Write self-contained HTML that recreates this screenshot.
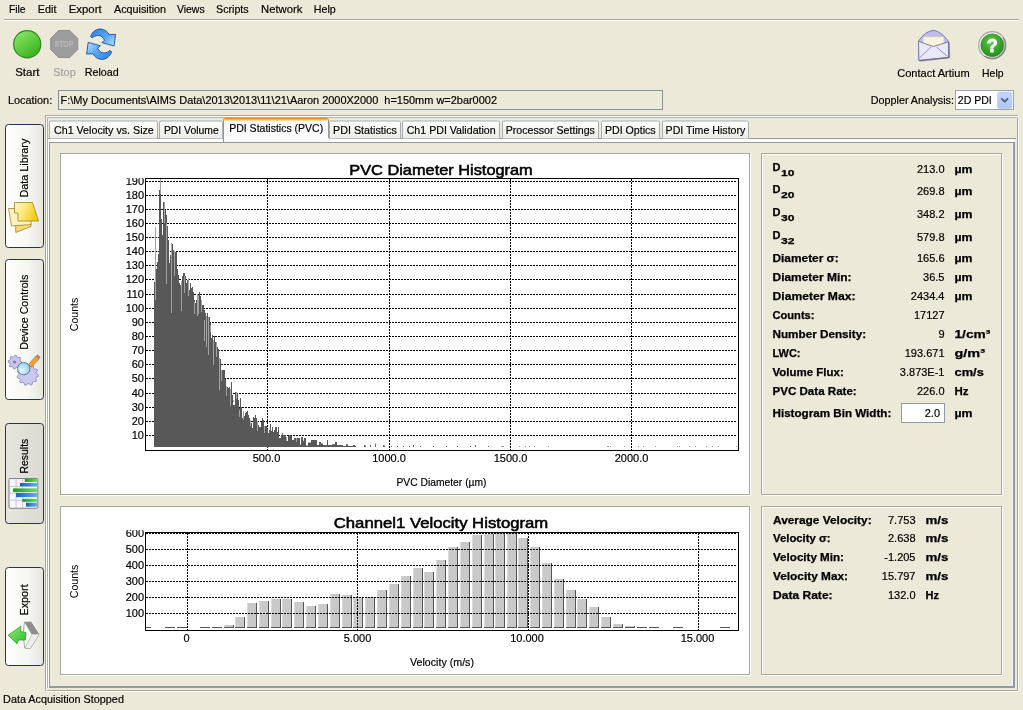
<!DOCTYPE html>
<html><head><meta charset="utf-8"><title>AIMS</title>
<style>
html,body{margin:0;padding:0;background:#ECE9D8;}
body{width:1023px;height:710px;overflow:hidden;position:relative;}
svg{position:absolute;left:0;top:0;font-family:"Liberation Sans", sans-serif;will-change:transform;}
</style></head>
<body>
<svg width="1023" height="710" viewBox="0 0 1023 710">
<rect x="0" y="0" width="1023" height="710" fill="#ECE9D8"/>
<text x="8.9" y="13" font-size="11" font-weight="normal" fill="#000" text-anchor="start" stroke="#000" stroke-width="0.18" textLength="16.7" lengthAdjust="spacingAndGlyphs" >File</text>
<text x="37.8" y="13" font-size="11" font-weight="normal" fill="#000" text-anchor="start" stroke="#000" stroke-width="0.18" textLength="18.6" lengthAdjust="spacingAndGlyphs" >Edit</text>
<text x="68.8" y="13" font-size="11" font-weight="normal" fill="#000" text-anchor="start" stroke="#000" stroke-width="0.18" textLength="32.8" lengthAdjust="spacingAndGlyphs" >Export</text>
<text x="114.0" y="13" font-size="11" font-weight="normal" fill="#000" text-anchor="start" stroke="#000" stroke-width="0.18" textLength="52.0" lengthAdjust="spacingAndGlyphs" >Acquisition</text>
<text x="176.9" y="13" font-size="11" font-weight="normal" fill="#000" text-anchor="start" stroke="#000" stroke-width="0.18" textLength="27.8" lengthAdjust="spacingAndGlyphs" >Views</text>
<text x="216.0" y="13" font-size="11" font-weight="normal" fill="#000" text-anchor="start" stroke="#000" stroke-width="0.18" textLength="32.7" lengthAdjust="spacingAndGlyphs" >Scripts</text>
<text x="261.0" y="13" font-size="11" font-weight="normal" fill="#000" text-anchor="start" stroke="#000" stroke-width="0.18" textLength="41.3" lengthAdjust="spacingAndGlyphs" >Network</text>
<text x="313.8" y="13" font-size="11" font-weight="normal" fill="#000" text-anchor="start" stroke="#000" stroke-width="0.18" textLength="22.0" lengthAdjust="spacingAndGlyphs" >Help</text>
<rect x="4" y="19" width="1015" height="1" fill="#ACA899"/><rect x="4" y="20" width="1015" height="1" fill="#FFFFFF"/>
<defs>
<linearGradient id="gStart" x1="0.2" y1="0.1" x2="0.8" y2="0.95">
 <stop offset="0" stop-color="#86E262"/><stop offset="0.5" stop-color="#5CCB3C"/><stop offset="1" stop-color="#38AE22"/>
</linearGradient>
<radialGradient id="gHelp" cx="0.45" cy="0.35" r="0.7">
 <stop offset="0" stop-color="#5CC846"/><stop offset="1" stop-color="#1F8A18"/>
</radialGradient>
<linearGradient id="gBtn" x1="0" y1="0" x2="1" y2="0">
 <stop offset="0" stop-color="#FFFFFF"/><stop offset="0.6" stop-color="#F6F6F2"/><stop offset="1" stop-color="#E6E5DC"/>
</linearGradient>
<linearGradient id="gBtnSel" x1="0" y1="0" x2="1" y2="0">
 <stop offset="0" stop-color="#E6E5DE"/><stop offset="1" stop-color="#DCDBD3"/>
</linearGradient>
<linearGradient id="gTab" x1="0" y1="0" x2="0" y2="1">
 <stop offset="0" stop-color="#FFFFFF"/><stop offset="1" stop-color="#ECEBE6"/>
</linearGradient>
<linearGradient id="gArrow" x1="0" y1="0.2" x2="1" y2="0.9">
 <stop offset="0" stop-color="#2E84E4"/><stop offset="0.55" stop-color="#5AA8F0"/><stop offset="1" stop-color="#B4DEFF"/>
</linearGradient>
<linearGradient id="gCombo" x1="0" y1="0" x2="0" y2="1">
 <stop offset="0" stop-color="#C6D6FC"/><stop offset="1" stop-color="#B0C6F5"/>
</linearGradient>
<clipPath id="clipTop"><rect x="100" y="178.3" width="650" height="300"/></clipPath>
<clipPath id="clipBot"><rect x="100" y="530.2" width="650" height="130"/></clipPath><clipPath id="clipBars"><rect x="146" y="533" width="592" height="97"/></clipPath>
</defs>
<circle cx="27.2" cy="44.2" r="13.6" fill="url(#gStart)" stroke="#2F8A20" stroke-width="1.2"/>
<polygon points="77.7,49.6 69.8,57.5 58.6,57.5 50.7,49.6 50.7,38.4 58.6,30.5 69.8,30.5 77.7,38.4" fill="#9D9D9D" stroke="#8E8E8E" stroke-width="1"/>
<text x="64" y="46.8" font-size="9.5" font-weight="bold" fill="#B4B4B4" stroke="#B4B4B4" stroke-width="0.4" text-anchor="middle" textLength="19" lengthAdjust="spacingAndGlyphs">STOP</text>
<g stroke="#1A4E9C" stroke-width="0.9" fill="url(#gArrow)" stroke-linejoin="round">
<path id="arTop" d="M90.6,36.4 C92.6,31.2 96.8,28.8 100.8,29 C104.6,29.3 107.4,31.4 109.2,34.6 L115.6,34.4 L114,46 L101.8,42.6 L104.6,40.4 C103.2,37.4 101.2,35.6 98.4,35.5 C95.8,35.4 93.8,36.6 92.2,38 Z"/>
<use href="#arTop" transform="rotate(180 101.1 44.2)"/>
</g>
<text x="15.2" y="76" font-size="11" font-weight="normal" fill="#000" text-anchor="start" stroke="#000" stroke-width="0.18" textLength="24.3" lengthAdjust="spacingAndGlyphs" >Start</text>
<text x="53.3" y="76" font-size="11" font-weight="normal" fill="#A3A3A3" text-anchor="start" stroke="#A3A3A3" stroke-width="0.18" textLength="22.4" lengthAdjust="spacingAndGlyphs" >Stop</text>
<text x="84.7" y="76" font-size="11" font-weight="normal" fill="#000" text-anchor="start" stroke="#000" stroke-width="0.18" textLength="34.0" lengthAdjust="spacingAndGlyphs" >Reload</text>
<g stroke="#7A7AAA" stroke-width="1" stroke-linejoin="round">
<path d="M918.5,41 Q925,31.5 933.3,30.3 Q941.5,31.5 948.5,41.5 L948.5,57.5 L918.8,60.3 Z" fill="#BDBDEE"/>
<path d="M923,36.8 L943.8,36.8 L944,48 L923,48 Z" fill="#FDF3D8" stroke="#C9C2AC" stroke-width="0.6"/>
<path d="M918.5,41.2 Q927,44.5 933.3,46.5 Q940,44.5 948.5,41.8 L948.5,57.5 L918.8,60.3 Z" fill="#E8E8FA"/>
<path d="M919.4,58 L931,47 M947.5,56.5 L936.5,47" fill="none" stroke="#8A8AB8" stroke-width="0.9"/>
<path d="M949,42 L949.5,57.5 L919.5,61" fill="none" stroke="#6A6A78" stroke-width="1.3" opacity="0.7"/>
</g>
<circle cx="992.3" cy="45.3" r="13.6" fill="#ECECE6" stroke="#A8A8A0" stroke-width="1.2"/>
<path d="M1003.1,37.7 A13.3,13.3 0 0 1 984.7,56.2" fill="none" stroke="#6E6E6E" stroke-width="1.3" opacity="0.75"/>
<circle cx="992.3" cy="45.3" r="11.4" fill="url(#gHelp)" stroke="#2A7A22" stroke-width="0.6"/>
<text x="992.3" y="51.8" font-size="18" font-weight="bold" fill="#F4FFF0" stroke="#F4FFF0" stroke-width="0.9" text-anchor="middle">?</text>
<text x="897.2" y="77" font-size="11" font-weight="normal" fill="#000" text-anchor="start" stroke="#000" stroke-width="0.18" textLength="72.5" lengthAdjust="spacingAndGlyphs" >Contact Artium</text>
<text x="982.1" y="77" font-size="11" font-weight="normal" fill="#000" text-anchor="start" stroke="#000" stroke-width="0.18" textLength="21.4" lengthAdjust="spacingAndGlyphs" >Help</text>
<text x="7.9" y="104" font-size="11" font-weight="normal" fill="#000" text-anchor="start" stroke="#000" stroke-width="0.18" textLength="44.3" lengthAdjust="spacingAndGlyphs" >Location:</text>
<rect x="58.5" y="90.5" width="604" height="19" fill="#ECE9D8" stroke="#889296" stroke-width="1"/>
<rect x="59" y="91" width="603" height="1" fill="#E2EEF0"/><rect x="59" y="108" width="603" height="1" fill="#E2EEF0"/>
<text x="60.5" y="104" font-size="11" font-weight="normal" fill="#000" text-anchor="start" stroke="#000" stroke-width="0.18" textLength="436.5" lengthAdjust="spacingAndGlyphs" >F:\My Documents\AIMS Data\2013\2013\11\21\Aaron 2000X2000&#160;&#160;h=150mm w=2bar0002</text>
<text x="870.8" y="104" font-size="11" font-weight="normal" fill="#000" text-anchor="start" stroke="#000" stroke-width="0.18" textLength="83.1" lengthAdjust="spacingAndGlyphs" >Doppler Analysis:</text>
<rect x="955.5" y="90.5" width="58" height="19" fill="#FFFFFF" stroke="#98A4AE" stroke-width="1"/>
<text x="957.8" y="104" font-size="11" font-weight="normal" fill="#000" text-anchor="start" stroke="#000" stroke-width="0.18" textLength="33.9" lengthAdjust="spacingAndGlyphs" >2D PDI</text>
<rect x="997.5" y="92" width="14.5" height="16.5" rx="1.5" fill="url(#gCombo)" stroke="#B9CBF3" stroke-width="0.6"/>
<path d="M1001.3,98.3 L1004.7,101.7 L1008.1,98.3" fill="none" stroke="#4D6185" stroke-width="1.8"/>
<rect x="5.5" y="124.5" width="38" height="123" rx="3" fill="url(#gBtn)" stroke="#22364E" stroke-width="1"/>
<text transform="translate(27.9,197.5) rotate(-90)" font-size="11" stroke="#000" stroke-width="0.18" textLength="58.8" lengthAdjust="spacingAndGlyphs">Data Library</text>
<rect x="5.5" y="259.5" width="38" height="140" rx="3" fill="url(#gBtn)" stroke="#22364E" stroke-width="1"/>
<text transform="translate(27.9,349.8) rotate(-90)" font-size="11" stroke="#000" stroke-width="0.18" textLength="75.1" lengthAdjust="spacingAndGlyphs">Device Controls</text>
<rect x="5.5" y="423.5" width="38" height="100" rx="3" fill="url(#gBtnSel)" stroke="#22364E" stroke-width="1"/>
<text transform="translate(27.9,473.5) rotate(-90)" font-size="11" stroke="#000" stroke-width="0.18" textLength="34.8" lengthAdjust="spacingAndGlyphs">Results</text>
<rect x="5.5" y="567.5" width="38" height="98" rx="3" fill="url(#gBtn)" stroke="#22364E" stroke-width="1"/>
<text transform="translate(27.9,615.5) rotate(-90)" font-size="11" stroke="#000" stroke-width="0.18" textLength="31.2" lengthAdjust="spacingAndGlyphs">Export</text>
<defs><linearGradient id="gYel" x1="0" y1="0" x2="1" y2="0.3"><stop offset="0" stop-color="#FFF8C8"/><stop offset="0.45" stop-color="#FCEB80"/><stop offset="1" stop-color="#F2CC18"/></linearGradient>
<linearGradient id="gGreen" x1="0" y1="0" x2="1" y2="0"><stop offset="0" stop-color="#12A012"/><stop offset="1" stop-color="#7AD86A"/></linearGradient>
<linearGradient id="gBlue" x1="0" y1="0" x2="1" y2="0"><stop offset="0" stop-color="#1060C0"/><stop offset="1" stop-color="#70B0E8"/></linearGradient>
<linearGradient id="gExArrow" x1="0" y1="0" x2="1" y2="1"><stop offset="0" stop-color="#8CF07A"/><stop offset="1" stop-color="#32B82C"/></linearGradient>
<radialGradient id="gLens" cx="0.35" cy="0.65" r="0.8"><stop offset="0" stop-color="#E8FAFF"/><stop offset="1" stop-color="#7EC4E8"/></radialGradient>
</defs>
<g stroke="#A4822A" stroke-width="0.8" stroke-linejoin="round">
<path d="M15.5,222 L31,224 L31,226.5 L15.8,232.5 Z" fill="#F3DC70"/>
<path d="M8.5,208.5 L14.5,208.5 L14.5,212 L31,212 L31,224.5 L11.5,226 Z" fill="#FBF2C0"/>
<path d="M14.5,202.5 L32.5,202.5 L38.5,221 L18,221 L18,213 L14.5,213 Z" fill="url(#gYel)"/>
</g>
<polygon points="21.90,362.10 21.77,363.45 19.90,364.13 19.41,365.04 19.88,366.98 18.83,367.84 17.03,367.00 16.03,367.30 15.00,369.00 13.65,368.87 12.97,367.00 12.06,366.51 10.12,366.98 9.26,365.93 10.10,364.13 9.80,363.13 8.10,362.10 8.23,360.75 10.10,360.07 10.59,359.16 10.12,357.22 11.17,356.36 12.97,357.20 13.97,356.90 15.00,355.20 16.35,355.33 17.03,357.20 17.94,357.69 19.88,357.22 20.74,358.27 19.90,360.07 20.20,361.07" fill="#C8C5EE" stroke="#8480BC" stroke-width="0.8" stroke-linejoin="round"/>
<circle cx="14.5" cy="362" r="1.6" fill="#7E7AB4"/>
<polygon points="38.40,374.80 38.29,376.32 36.14,377.28 35.70,378.46 36.70,380.58 35.79,381.81 33.46,381.45 32.46,382.20 32.14,384.53 30.71,385.07 28.95,383.51 27.70,383.60 26.18,385.39 24.69,385.07 24.04,382.80 22.94,382.20 20.69,382.89 19.61,381.81 20.30,379.56 19.70,378.46 17.43,377.81 17.11,376.32 18.90,374.80 18.99,373.55 17.43,371.79 17.97,370.36 20.30,370.04 21.05,369.04 20.69,366.71 21.92,365.80 24.04,366.80 25.22,366.36 26.18,364.21 27.70,364.10 28.95,366.09 30.18,366.36 32.14,365.07 33.48,365.80 33.46,368.15 34.35,369.04 36.70,369.02 37.43,370.36 36.14,372.32 36.41,373.55" fill="#CBC8F0" stroke="#8480BC" stroke-width="0.8" stroke-linejoin="round"/>
<path d="M28.5,364.5 L36,356 L39.2,358.8 L31.5,367.2 Z" fill="#F2A030" stroke="#A86A20" stroke-width="0.6"/>
<path d="M36,356 L37.5,354.4 L40.6,357.2 L39.2,358.8 Z" fill="#8A8A8A"/>
<circle cx="23.7" cy="368.6" r="6.2" fill="url(#gLens)" stroke="#4E7A90" stroke-width="0.9"/>
<g>
<rect x="9" y="478.5" width="28.8" height="29.8" rx="1" fill="#F6F7FA" stroke="#7C8088" stroke-width="1"/>
<path d="M9,486.4 H37.5 M9,493.2 H37.5 M9,500.2 H37.5 M16.1,478.5 V508 M22.6,478.5 V508" stroke="#B4B8C0" stroke-width="0.7"/>
<rect x="24.8" y="479" width="12.5" height="3" fill="url(#gGreen)"/>
<rect x="20" y="483" width="17.3" height="3.4" fill="url(#gBlue)"/>
<rect x="13" y="488.4" width="24.3" height="3.6" fill="url(#gGreen)"/>
<rect x="16.1" y="492.9" width="21.2" height="4.2" fill="url(#gBlue)"/>
<rect x="22.3" y="498.8" width="15" height="3.1" fill="url(#gGreen)"/>
<rect x="26" y="502.7" width="11.3" height="4" fill="url(#gBlue)"/>
</g>
<g stroke-linejoin="round">
<path d="M24.5,622.2 L31,622.2 L38.9,634.6 L30.5,648.1 L24.8,648.1 L23.5,635 Z" fill="#D8D8D8" stroke="#727272" stroke-width="0.8"/>
<path d="M24.5,622.2 L31,622.2 L38.9,634.6 L31.8,634.6 Z" fill="#8E8E8E"/>
<path d="M31.8,634.6 L38.9,634.6 L30.5,648.1 L24.8,648.1 Z" fill="#EEEEEE"/>
<path d="M24.5,622.2 L31.8,634.6 L24.8,648.1 L23.5,635 Z" fill="#FFFFFF" stroke="#9A9A9A" stroke-width="0.5"/>
<path d="M8.2,635.2 L20.9,626.2 L20.5,631.6 L26,632.6 L25.5,640 L18.6,640 L17,643.8 Z" fill="url(#gExArrow)" stroke="#34A02A" stroke-width="0.8"/>
</g>
<rect x="45.5" y="115.5" width="972" height="575" fill="none" stroke="#ACA899"/>
<rect x="46.5" y="116.5" width="972" height="575" fill="none" stroke="#FFFFFF"/>
<path d="M47.5,688 V117.5 H1016" fill="none" stroke="#A8B0B8"/>
<rect x="49" y="142" width="966" height="546" fill="#ECE9D8"/>
<path d="M49.5,687 V142.5 H1014" fill="none" stroke="#919B9C"/>
<path d="M48.5,688 V139.5 H1015" fill="none" stroke="#FFFFFF"/>
<rect x="48" y="139" width="967" height="3" fill="#FCFCFC"/>
<rect x="1013" y="142" width="2" height="546" fill="#8E9AA6"/><rect x="49" y="686" width="966" height="2" fill="#8E9AA6"/>
<rect x="1012" y="143" width="1" height="543" fill="#F4F6F8"/>
<rect x="48" y="138" width="968" height="1" fill="#919B9C"/>
<path d="M49.5,138.5 V122.5 Q49.5,121 51,121 H155.5 Q157.5,121 157.5,122.5 V138.5" fill="url(#gTab)" stroke="#A6AEB1"/>
<text x="54.0" y="133.6" font-size="11" font-weight="normal" fill="#000" text-anchor="start" stroke="#000" stroke-width="0.18" textLength="99.8" lengthAdjust="spacingAndGlyphs" >Ch1 Velocity vs. Size</text>
<path d="M159.5,138.5 V122.5 Q159.5,121 161,121 H220.5 Q222.5,121 222.5,122.5 V138.5" fill="url(#gTab)" stroke="#A6AEB1"/>
<text x="163.9" y="133.6" font-size="11" font-weight="normal" fill="#000" text-anchor="start" stroke="#000" stroke-width="0.18" textLength="54.8" lengthAdjust="spacingAndGlyphs" >PDI Volume</text>
<path d="M223.5,142 V120 Q223.5,118.5 225,118.5 H326.5 Q328.5,118.5 328.5,120 V142" fill="#FCFCFE" stroke="#919B9C"/>
<rect x="224" y="118" width="104" height="2.5" fill="#F5B64A"/>
<rect x="225" y="118" width="102" height="1" fill="#E68B2C"/>
<rect x="224" y="138" width="105" height="4" fill="#FCFCFE"/>
<text x="229.2" y="132.2" font-size="11" font-weight="normal" fill="#000" text-anchor="start" stroke="#000" stroke-width="0.18" textLength="94.0" lengthAdjust="spacingAndGlyphs" >PDI Statistics (PVC)</text>
<path d="M329.5,138.5 V122.5 Q329.5,121 331,121 H398.5 Q400.5,121 400.5,122.5 V138.5" fill="url(#gTab)" stroke="#A6AEB1"/>
<text x="333.0" y="133.6" font-size="11" font-weight="normal" fill="#000" text-anchor="start" stroke="#000" stroke-width="0.18" textLength="63.9" lengthAdjust="spacingAndGlyphs" >PDI Statistics</text>
<path d="M402.5,138.5 V122.5 Q402.5,121 404,121 H497.5 Q499.5,121 499.5,122.5 V138.5" fill="url(#gTab)" stroke="#A6AEB1"/>
<text x="406.7" y="133.6" font-size="11" font-weight="normal" fill="#000" text-anchor="start" stroke="#000" stroke-width="0.18" textLength="89.0" lengthAdjust="spacingAndGlyphs" >Ch1 PDI Validation</text>
<path d="M502.5,138.5 V122.5 Q502.5,121 504,121 H596.5 Q598.5,121 598.5,122.5 V138.5" fill="url(#gTab)" stroke="#A6AEB1"/>
<text x="505.7" y="133.6" font-size="11" font-weight="normal" fill="#000" text-anchor="start" stroke="#000" stroke-width="0.18" textLength="89.2" lengthAdjust="spacingAndGlyphs" >Processor Settings</text>
<path d="M601.5,138.5 V122.5 Q601.5,121 603,121 H657.5 Q659.5,121 659.5,122.5 V138.5" fill="url(#gTab)" stroke="#A6AEB1"/>
<text x="604.9" y="133.6" font-size="11" font-weight="normal" fill="#000" text-anchor="start" stroke="#000" stroke-width="0.18" textLength="50.8" lengthAdjust="spacingAndGlyphs" >PDI Optics</text>
<path d="M662.5,138.5 V122.5 Q662.5,121 664,121 H746.5 Q748.5,121 748.5,122.5 V138.5" fill="url(#gTab)" stroke="#A6AEB1"/>
<text x="665.6" y="133.6" font-size="11" font-weight="normal" fill="#000" text-anchor="start" stroke="#000" stroke-width="0.18" textLength="79.8" lengthAdjust="spacingAndGlyphs" >PDI Time History</text>
<rect x="60" y="153" width="690" height="342" fill="#FFFFFF"/>
<rect x="61.5" y="154.5" width="689" height="341" fill="none" stroke="#FFFFFF"/>
<rect x="60.5" y="153.5" width="689" height="341" fill="none" stroke="#ACA899"/>
<rect x="761" y="153" width="241" height="342" fill="#ECE9D8"/>
<rect x="762.5" y="154.5" width="240" height="341" fill="none" stroke="#FFFFFF"/>
<rect x="761.5" y="153.5" width="240" height="341" fill="none" stroke="#ACA899"/>
<rect x="60" y="506" width="690" height="169" fill="#FFFFFF"/>
<rect x="61.5" y="507.5" width="689" height="168" fill="none" stroke="#FFFFFF"/>
<rect x="60.5" y="506.5" width="689" height="168" fill="none" stroke="#ACA899"/>
<rect x="761" y="506" width="241" height="169" fill="#ECE9D8"/>
<rect x="762.5" y="507.5" width="240" height="168" fill="none" stroke="#FFFFFF"/>
<rect x="761.5" y="506.5" width="240" height="168" fill="none" stroke="#ACA899"/>
<text x="441" y="174.7" font-size="15" font-weight="normal" fill="#000" text-anchor="middle" textLength="183.5" lengthAdjust="spacingAndGlyphs" stroke="#000" stroke-width="0.55">PVC Diameter Histogram</text>
<path d="M146,435.5 H737" stroke="#000" stroke-width="1" stroke-dasharray="2 1"/>
<path d="M146,421.5 H737" stroke="#000" stroke-width="1" stroke-dasharray="2 1"/>
<path d="M146,407.5 H737" stroke="#000" stroke-width="1" stroke-dasharray="2 1"/>
<path d="M146,393.5 H737" stroke="#000" stroke-width="1" stroke-dasharray="2 1"/>
<path d="M146,378.5 H737" stroke="#000" stroke-width="1" stroke-dasharray="2 1"/>
<path d="M146,364.5 H737" stroke="#000" stroke-width="1" stroke-dasharray="2 1"/>
<path d="M146,350.5 H737" stroke="#000" stroke-width="1" stroke-dasharray="2 1"/>
<path d="M146,336.5 H737" stroke="#000" stroke-width="1" stroke-dasharray="2 1"/>
<path d="M146,322.5 H737" stroke="#000" stroke-width="1" stroke-dasharray="2 1"/>
<path d="M146,308.5 H737" stroke="#000" stroke-width="1" stroke-dasharray="2 1"/>
<path d="M146,294.5 H737" stroke="#000" stroke-width="1" stroke-dasharray="2 1"/>
<path d="M146,279.5 H737" stroke="#000" stroke-width="1" stroke-dasharray="2 1"/>
<path d="M146,265.5 H737" stroke="#000" stroke-width="1" stroke-dasharray="2 1"/>
<path d="M146,251.5 H737" stroke="#000" stroke-width="1" stroke-dasharray="2 1"/>
<path d="M146,237.5 H737" stroke="#000" stroke-width="1" stroke-dasharray="2 1"/>
<path d="M146,223.5 H737" stroke="#000" stroke-width="1" stroke-dasharray="2 1"/>
<path d="M146,209.5 H737" stroke="#000" stroke-width="1" stroke-dasharray="2 1"/>
<path d="M146,195.5 H737" stroke="#000" stroke-width="1" stroke-dasharray="2 1"/>
<path d="M146,181.5 H737" stroke="#000" stroke-width="1" stroke-dasharray="2 1"/>
<path d="M267.5,179 V450" stroke="#000" stroke-width="1" stroke-dasharray="2 1"/>
<path d="M389.5,179 V450" stroke="#000" stroke-width="1" stroke-dasharray="2 1"/>
<path d="M510.5,179 V450" stroke="#000" stroke-width="1" stroke-dasharray="2 1"/>
<path d="M631.5,179 V450" stroke="#000" stroke-width="1" stroke-dasharray="2 1"/>
<path d="M154,282.0H155V447H154ZM155,270.0H156V447H155ZM156,269.0H157V447H156ZM157,262.0H158V447H157ZM158,254.0H159V447H158ZM159,190.0H160V447H159ZM160,190.0H161V447H160ZM161,219.0H162V447H161ZM162,235.0H163V447H162ZM163,202.0H164V447H163ZM164,202.0H165V447H164ZM165,210.0H166V447H165ZM166,215.0H167V447H166ZM167,226.0H168V447H167ZM168,240.0H169V447H168ZM169,263.0H170V447H169ZM170,255.0H171V447H170ZM171,255.0H172V447H171ZM172,244.0H173V447H172ZM173,250.0H174V447H173ZM174,257.0H175V447H174ZM175,252.0H176V447H175ZM176,252.0H177V447H176ZM177,269.0H178V447H177ZM178,275.0H179V447H178ZM179,283.0H180V447H179ZM180,285.0H181V447H180ZM181,288.0H182V447H181ZM182,276.0H183V447H182ZM183,273.0H184V447H183ZM184,273.0H185V447H184ZM185,276.0H186V447H185ZM186,283.0H187V447H186ZM187,280.0H188V447H187ZM188,278.0H189V447H188ZM189,290.0H190V447H189ZM190,283.0H191V447H190ZM191,288.0H192V447H191ZM192,287.0H193V447H192ZM193,292.0H194V447H193ZM194,300.0H195V447H194ZM195,303.0H196V447H195ZM196,300.0H197V447H196ZM197,297.0H198V447H197ZM198,295.0H199V447H198ZM199,292.0H200V447H199ZM200,296.0H201V447H200ZM201,300.0H202V447H201ZM202,305.0H203V447H202ZM203,305.0H204V447H203ZM204,310.0H205V447H204ZM205,313.0H206V447H205ZM206,316.0H207V447H206ZM207,313.0H208V447H207ZM208,317.0H209V447H208ZM209,317.0H210V447H209ZM210,323.0H211V447H210ZM211,338.0H212V447H211ZM212,335.0H213V447H212ZM213,340.0H214V447H213ZM214,336.0H215V447H214ZM215,342.0H216V447H215ZM216,342.0H217V447H216ZM217,347.0H218V447H217ZM218,349.0H219V447H218ZM219,358.0H220V447H219ZM220,359.0H221V447H220ZM221,372.0H222V447H221ZM222,370.0H223V447H222ZM223,370.0H224V447H223ZM224,370.0H225V447H224ZM225,379.0H226V447H225ZM226,386.0H227V447H226ZM227,387.0H228V447H227ZM228,388.0H229V447H228ZM229,387.0H230V447H229ZM230,394.0H231V447H230ZM231,382.0H232V447H231ZM232,395.0H233V447H232ZM233,405.0H234V447H233ZM234,405.0H235V447H234ZM235,392.0H236V447H235ZM236,394.0H237V447H236ZM237,393.0H238V447H237ZM238,400.0H239V447H238ZM239,408.0H240V447H239ZM240,398.0H241V447H240ZM241,407.0H242V447H241ZM242,418.0H243V447H242ZM243,414.0H244V447H243ZM244,416.0H245V447H244ZM245,413.0H246V447H245ZM246,412.0H247V447H246ZM247,411.0H248V447H247ZM248,415.0H249V447H248ZM249,418.0H250V447H249ZM250,423.0H251V447H250ZM251,423.0H252V447H251ZM252,428.0H253V447H252ZM253,417.0H254V447H253ZM254,418.0H255V447H254ZM255,415.0H256V447H255ZM256,418.0H257V447H256ZM257,423.0H258V447H257ZM258,425.0H259V447H258ZM259,427.0H260V447H259ZM260,427.0H261V447H260ZM261,422.0H262V447H261ZM262,418.0H263V447H262ZM263,420.0H264V447H263ZM264,431.0H265V447H264ZM265,426.0H266V447H265ZM266,426.0H267V447H266ZM267,429.0H268V447H267ZM268,433.0H269V447H268ZM269,430.0H270V447H269ZM270,424.0H271V447H270ZM271,431.0H272V447H271ZM272,427.0H273V447H272ZM273,432.0H274V447H273ZM274,430.0H275V447H274ZM275,427.0H276V447H275ZM276,427.0H277V447H276ZM277,432.0H278V447H277ZM278,427.0H279V447H278ZM279,438.0H280V447H279ZM280,438.0H281V447H280ZM281,435.0H282V447H281ZM282,433.0H283V447H282ZM283,435.0H284V447H283ZM284,435.0H285V447H284ZM285,435.0H286V447H285ZM286,441.0H287V447H286ZM287,441.0H288V447H287ZM288,436.0H289V447H288ZM289,435.5H290V447H289ZM290,435.5H291V447H290ZM291,436.0H292V447H291ZM292,440.0H293V447H292ZM293,440.0H294V447H293ZM294,438.0H295V447H294ZM295,438.0H296V447H295ZM296,438.0H297V447H296ZM297,438.0H298V447H297ZM298,438.0H299V447H298ZM299,438.0H300V447H299ZM300,444.7H301V447H300ZM301,437.3H302V447H301ZM302,437.3H303V447H302ZM303,440.8H304V447H303ZM304,438.0H305V447H304ZM305,438.0H306V447H305ZM306,445.5H307V447H306ZM307,445.5H308V447H307ZM308,442.4H309V447H308ZM309,442.4H310V447H309ZM310,442.4H311V447H310ZM311,440.0H312V447H311ZM312,440.0H313V447H312ZM313,440.0H314V447H313ZM314,440.0H315V447H314ZM315,440.0H316V447H315ZM316,440.0H317V447H316ZM317,445.0H318V447H317ZM318,445.0H319V447H318ZM319,442.0H320V447H319ZM320,442.0H321V447H320ZM321,443.5H322V447H321ZM322,443.5H323V447H322ZM323,445.0H324V447H323ZM324,445.0H325V447H324ZM325,445.0H326V447H325ZM326,445.0H327V447H326ZM327,440.0H328V447H327ZM328,445.0H329V447H328ZM329,445.0H330V447H329ZM330,445.0H331V447H330ZM331,445.0H332V447H331ZM332,444.3H333V447H332ZM333,444.3H334V447H333ZM334,444.3H335V447H334ZM335,442.0H336V447H335ZM336,442.0H337V447H336ZM337,445.0H338V447H337ZM338,445.0H339V447H338ZM339,445.0H340V447H339ZM340,445.0H341V447H340ZM341,445.0H342V447H341ZM342,445.0H343V447H342ZM343,446.0H344V447H343ZM344,446.0H345V447H344ZM345,446.0H346V447H345ZM346,444.3H347V447H346ZM347,444.3H348V447H347ZM348,446.0H349V447H348ZM349,446.0H350V447H349ZM350,446.0H351V447H350ZM351,446.0H352V447H351ZM352,446.0H353V447H352ZM353,445.0H354V447H353ZM354,445.0H355V447H354ZM355,446.0H356V447H355Z" fill="#585858" clip-path="url(#clipTop)"/>
<path d="M155.5,227V300M160.5,178V194M164.5,202V223M166.5,223V284M171.5,243V313M174.5,251V276M181.5,281V311M184.5,276V293M188.5,278V296M194.5,302V314M197.5,294V316M198.5,295V314M201.5,300V312M204.5,320V341M206.5,316V347M208.5,317V355M210.5,325V332M213.5,340V365M216.5,342V357M219.5,358V390M221.5,370V381M226.5,386V396M230.5,389V406M233.5,400V402M236.5,392V399M239.5,410V417M243.5,411V420M250.5,420V426M257.5,421V431M264.5,426V433M286.5,437V441M296.5,438V442" stroke="#A2A2A2" stroke-width="1" fill="none"/>
<path d="M364,445H365V447H364ZM365,445.5H366V447H365ZM370,445H371V447H370ZM375,443.5H376V447H375ZM383,445H384V447H383ZM384,445.5H385V447H384ZM391,446H392V447H391ZM397,446H398V447H397ZM403,446H404V447H403ZM409,446H410V447H409ZM413,445H414V447H413ZM420,446H421V447H420ZM433,446H434V447H433ZM446,446H447V447H446ZM457,446H458V447H457ZM470,446H471V447H470ZM475,445H476V447H475ZM488,446H489V447H488Z" fill="#6A6A6A"/>
<path d="M501,446h1v1h-1ZM502,446h1v1h-1ZM503,446h1v1h-1ZM519,446h1v1h-1ZM525,446h1v1h-1ZM529,446h1v1h-1ZM534,446h1v1h-1ZM548,446h1v1h-1ZM607,446h1v1h-1ZM608,446h1v1h-1ZM610,446h1v1h-1ZM624,446h1v1h-1ZM638,446h1v1h-1ZM643,446h1v1h-1ZM655,446h1v1h-1ZM677,446h1v1h-1ZM679,446h1v1h-1ZM689,446h1v1h-1ZM695,446h1v1h-1ZM706,446h1v1h-1ZM712,446h1v1h-1ZM718,446h1v1h-1ZM736,446h1v1h-1Z" fill="#9C9C9C"/>
<rect x="145.5" y="178.5" width="593" height="272" fill="none" stroke="#000" stroke-width="1"/>
<g clip-path="url(#clipTop)">
<text x="144" y="439" font-size="11" font-weight="normal" fill="#000" text-anchor="end" stroke="#000" stroke-width="0.18" >10</text>
<text x="144" y="425" font-size="11" font-weight="normal" fill="#000" text-anchor="end" stroke="#000" stroke-width="0.18" >20</text>
<text x="144" y="411" font-size="11" font-weight="normal" fill="#000" text-anchor="end" stroke="#000" stroke-width="0.18" >30</text>
<text x="144" y="397" font-size="11" font-weight="normal" fill="#000" text-anchor="end" stroke="#000" stroke-width="0.18" >40</text>
<text x="144" y="382" font-size="11" font-weight="normal" fill="#000" text-anchor="end" stroke="#000" stroke-width="0.18" >50</text>
<text x="144" y="368" font-size="11" font-weight="normal" fill="#000" text-anchor="end" stroke="#000" stroke-width="0.18" >60</text>
<text x="144" y="354" font-size="11" font-weight="normal" fill="#000" text-anchor="end" stroke="#000" stroke-width="0.18" >70</text>
<text x="144" y="340" font-size="11" font-weight="normal" fill="#000" text-anchor="end" stroke="#000" stroke-width="0.18" >80</text>
<text x="144" y="326" font-size="11" font-weight="normal" fill="#000" text-anchor="end" stroke="#000" stroke-width="0.18" >90</text>
<text x="144" y="312" font-size="11" font-weight="normal" fill="#000" text-anchor="end" stroke="#000" stroke-width="0.18" >100</text>
<text x="144" y="298" font-size="11" font-weight="normal" fill="#000" text-anchor="end" stroke="#000" stroke-width="0.18" >110</text>
<text x="144" y="283" font-size="11" font-weight="normal" fill="#000" text-anchor="end" stroke="#000" stroke-width="0.18" >120</text>
<text x="144" y="269" font-size="11" font-weight="normal" fill="#000" text-anchor="end" stroke="#000" stroke-width="0.18" >130</text>
<text x="144" y="255" font-size="11" font-weight="normal" fill="#000" text-anchor="end" stroke="#000" stroke-width="0.18" >140</text>
<text x="144" y="241" font-size="11" font-weight="normal" fill="#000" text-anchor="end" stroke="#000" stroke-width="0.18" >150</text>
<text x="144" y="227" font-size="11" font-weight="normal" fill="#000" text-anchor="end" stroke="#000" stroke-width="0.18" >160</text>
<text x="144" y="213" font-size="11" font-weight="normal" fill="#000" text-anchor="end" stroke="#000" stroke-width="0.18" >170</text>
<text x="144" y="199" font-size="11" font-weight="normal" fill="#000" text-anchor="end" stroke="#000" stroke-width="0.18" >180</text>
<text x="144" y="185" font-size="11" font-weight="normal" fill="#000" text-anchor="end" stroke="#000" stroke-width="0.18" >190</text>
</g>
<text x="266.5" y="462" font-size="11" font-weight="normal" fill="#000" text-anchor="middle" stroke="#000" stroke-width="0.18" >500.0</text>
<text x="389" y="462" font-size="11" font-weight="normal" fill="#000" text-anchor="middle" stroke="#000" stroke-width="0.18" >1000.0</text>
<text x="510.5" y="462" font-size="11" font-weight="normal" fill="#000" text-anchor="middle" stroke="#000" stroke-width="0.18" >1500.0</text>
<text x="631.5" y="462" font-size="11" font-weight="normal" fill="#000" text-anchor="middle" stroke="#000" stroke-width="0.18" >2000.0</text>
<text x="441.5" y="486" font-size="11" font-weight="normal" fill="#000" text-anchor="middle" stroke="#000" stroke-width="0.18" textLength="90" lengthAdjust="spacingAndGlyphs" >PVC Diameter (µm)</text>
<text transform="translate(78,314.5) rotate(-90)" font-size="11" text-anchor="middle" textLength="33.5" lengthAdjust="spacingAndGlyphs">Counts</text>
<text x="441" y="527.7" font-size="15" font-weight="normal" fill="#000" text-anchor="middle" textLength="214.5" lengthAdjust="spacingAndGlyphs" stroke="#000" stroke-width="0.55">Channel1 Velocity Histogram</text>
<g clip-path="url(#clipBars)">
<rect x="146" y="627" width="5" height="1" fill="#C9C9C9"/>
<rect x="150" y="627" width="1" height="1" fill="#555555"/><rect x="146" y="627" width="5" height="1" fill="#555555"/>
<rect x="165" y="627" width="10" height="1" fill="#C9C9C9"/>
<rect x="174" y="627" width="1" height="1" fill="#555555"/><rect x="165" y="627" width="10" height="1" fill="#555555"/>
<rect x="177" y="627" width="10" height="1" fill="#C9C9C9"/>
<rect x="186" y="627" width="1" height="1" fill="#555555"/><rect x="177" y="627" width="10" height="1" fill="#555555"/>
<rect x="200" y="627" width="10" height="1" fill="#C9C9C9"/>
<rect x="209" y="627" width="1" height="1" fill="#555555"/><rect x="200" y="627" width="10" height="1" fill="#555555"/>
<rect x="212" y="627" width="10" height="1" fill="#C9C9C9"/>
<rect x="221" y="627" width="1" height="1" fill="#555555"/><rect x="212" y="627" width="10" height="1" fill="#555555"/>
<rect x="224" y="625" width="10" height="3" fill="#C9C9C9"/>
<rect x="224" y="625" width="1" height="3" fill="#DADADA"/>
<rect x="233" y="625" width="1" height="3" fill="#555555"/><rect x="224" y="627" width="10" height="1" fill="#555555"/>
<rect x="235" y="617" width="10" height="11" fill="#C9C9C9"/>
<rect x="235" y="617" width="1" height="11" fill="#DADADA"/>
<rect x="244" y="617" width="1" height="11" fill="#555555"/><rect x="235" y="627" width="10" height="1" fill="#555555"/>
<rect x="247" y="603" width="10" height="25" fill="#C9C9C9"/>
<rect x="247" y="603" width="1" height="25" fill="#DADADA"/>
<rect x="256" y="603" width="1" height="25" fill="#555555"/><rect x="247" y="627" width="10" height="1" fill="#555555"/>
<rect x="259" y="601" width="10" height="27" fill="#C9C9C9"/>
<rect x="259" y="601" width="1" height="27" fill="#DADADA"/>
<rect x="268" y="601" width="1" height="27" fill="#555555"/><rect x="259" y="627" width="10" height="1" fill="#555555"/>
<rect x="271" y="599" width="10" height="29" fill="#C9C9C9"/>
<rect x="271" y="599" width="1" height="29" fill="#DADADA"/>
<rect x="280" y="599" width="1" height="29" fill="#555555"/><rect x="271" y="627" width="10" height="1" fill="#555555"/>
<rect x="282" y="599" width="10" height="29" fill="#C9C9C9"/>
<rect x="282" y="599" width="1" height="29" fill="#DADADA"/>
<rect x="291" y="599" width="1" height="29" fill="#555555"/><rect x="282" y="627" width="10" height="1" fill="#555555"/>
<rect x="294" y="602" width="10" height="26" fill="#C9C9C9"/>
<rect x="294" y="602" width="1" height="26" fill="#DADADA"/>
<rect x="303" y="602" width="1" height="26" fill="#555555"/><rect x="294" y="627" width="10" height="1" fill="#555555"/>
<rect x="306" y="606" width="10" height="22" fill="#C9C9C9"/>
<rect x="306" y="606" width="1" height="22" fill="#DADADA"/>
<rect x="315" y="606" width="1" height="22" fill="#555555"/><rect x="306" y="627" width="10" height="1" fill="#555555"/>
<rect x="318" y="604" width="10" height="24" fill="#C9C9C9"/>
<rect x="318" y="604" width="1" height="24" fill="#DADADA"/>
<rect x="327" y="604" width="1" height="24" fill="#555555"/><rect x="318" y="627" width="10" height="1" fill="#555555"/>
<rect x="330" y="594" width="10" height="34" fill="#C9C9C9"/>
<rect x="330" y="594" width="1" height="34" fill="#DADADA"/>
<rect x="339" y="594" width="1" height="34" fill="#555555"/><rect x="330" y="627" width="10" height="1" fill="#555555"/>
<rect x="342" y="595" width="10" height="33" fill="#C9C9C9"/>
<rect x="342" y="595" width="1" height="33" fill="#DADADA"/>
<rect x="351" y="595" width="1" height="33" fill="#555555"/><rect x="342" y="627" width="10" height="1" fill="#555555"/>
<rect x="353" y="597" width="10" height="31" fill="#C9C9C9"/>
<rect x="353" y="597" width="1" height="31" fill="#DADADA"/>
<rect x="362" y="597" width="1" height="31" fill="#555555"/><rect x="353" y="627" width="10" height="1" fill="#555555"/>
<rect x="365" y="597" width="10" height="31" fill="#C9C9C9"/>
<rect x="365" y="597" width="1" height="31" fill="#DADADA"/>
<rect x="374" y="597" width="1" height="31" fill="#555555"/><rect x="365" y="627" width="10" height="1" fill="#555555"/>
<rect x="377" y="590" width="10" height="38" fill="#C9C9C9"/>
<rect x="377" y="590" width="1" height="38" fill="#DADADA"/>
<rect x="386" y="590" width="1" height="38" fill="#555555"/><rect x="377" y="627" width="10" height="1" fill="#555555"/>
<rect x="389" y="584" width="10" height="44" fill="#C9C9C9"/>
<rect x="389" y="584" width="1" height="44" fill="#DADADA"/>
<rect x="398" y="584" width="1" height="44" fill="#555555"/><rect x="389" y="627" width="10" height="1" fill="#555555"/>
<rect x="401" y="576" width="10" height="52" fill="#C9C9C9"/>
<rect x="401" y="576" width="1" height="52" fill="#DADADA"/>
<rect x="410" y="576" width="1" height="52" fill="#555555"/><rect x="401" y="627" width="10" height="1" fill="#555555"/>
<rect x="413" y="568" width="10" height="60" fill="#C9C9C9"/>
<rect x="413" y="568" width="1" height="60" fill="#DADADA"/>
<rect x="422" y="568" width="1" height="60" fill="#555555"/><rect x="413" y="627" width="10" height="1" fill="#555555"/>
<rect x="424" y="572" width="10" height="56" fill="#C9C9C9"/>
<rect x="424" y="572" width="1" height="56" fill="#DADADA"/>
<rect x="433" y="572" width="1" height="56" fill="#555555"/><rect x="424" y="627" width="10" height="1" fill="#555555"/>
<rect x="436" y="560" width="10" height="68" fill="#C9C9C9"/>
<rect x="436" y="560" width="1" height="68" fill="#DADADA"/>
<rect x="445" y="560" width="1" height="68" fill="#555555"/><rect x="436" y="627" width="10" height="1" fill="#555555"/>
<rect x="448" y="547" width="10" height="81" fill="#C9C9C9"/>
<rect x="448" y="547" width="1" height="81" fill="#DADADA"/>
<rect x="457" y="547" width="1" height="81" fill="#555555"/><rect x="448" y="627" width="10" height="1" fill="#555555"/>
<rect x="460" y="542" width="10" height="86" fill="#C9C9C9"/>
<rect x="460" y="542" width="1" height="86" fill="#DADADA"/>
<rect x="469" y="542" width="1" height="86" fill="#555555"/><rect x="460" y="627" width="10" height="1" fill="#555555"/>
<rect x="472" y="535" width="10" height="93" fill="#C9C9C9"/>
<rect x="472" y="535" width="1" height="93" fill="#DADADA"/>
<rect x="481" y="535" width="1" height="93" fill="#555555"/><rect x="472" y="627" width="10" height="1" fill="#555555"/>
<rect x="484" y="534" width="10" height="94" fill="#C9C9C9"/>
<rect x="484" y="534" width="1" height="94" fill="#DADADA"/>
<rect x="493" y="534" width="1" height="94" fill="#555555"/><rect x="484" y="627" width="10" height="1" fill="#555555"/>
<rect x="495" y="533" width="10" height="95" fill="#C9C9C9"/>
<rect x="495" y="533" width="1" height="95" fill="#DADADA"/>
<rect x="504" y="533" width="1" height="95" fill="#555555"/><rect x="495" y="627" width="10" height="1" fill="#555555"/>
<rect x="507" y="533" width="10" height="95" fill="#C9C9C9"/>
<rect x="507" y="533" width="1" height="95" fill="#DADADA"/>
<rect x="516" y="533" width="1" height="95" fill="#555555"/><rect x="507" y="627" width="10" height="1" fill="#555555"/>
<rect x="518" y="538" width="10" height="90" fill="#C9C9C9"/>
<rect x="518" y="538" width="1" height="90" fill="#DADADA"/>
<rect x="527" y="538" width="1" height="90" fill="#555555"/><rect x="518" y="627" width="10" height="1" fill="#555555"/>
<rect x="530" y="547" width="10" height="81" fill="#C9C9C9"/>
<rect x="530" y="547" width="1" height="81" fill="#DADADA"/>
<rect x="539" y="547" width="1" height="81" fill="#555555"/><rect x="530" y="627" width="10" height="1" fill="#555555"/>
<rect x="542" y="563" width="10" height="65" fill="#C9C9C9"/>
<rect x="542" y="563" width="1" height="65" fill="#DADADA"/>
<rect x="551" y="563" width="1" height="65" fill="#555555"/><rect x="542" y="627" width="10" height="1" fill="#555555"/>
<rect x="554" y="579" width="10" height="49" fill="#C9C9C9"/>
<rect x="554" y="579" width="1" height="49" fill="#DADADA"/>
<rect x="563" y="579" width="1" height="49" fill="#555555"/><rect x="554" y="627" width="10" height="1" fill="#555555"/>
<rect x="566" y="590" width="10" height="38" fill="#C9C9C9"/>
<rect x="566" y="590" width="1" height="38" fill="#DADADA"/>
<rect x="575" y="590" width="1" height="38" fill="#555555"/><rect x="566" y="627" width="10" height="1" fill="#555555"/>
<rect x="577" y="599" width="10" height="29" fill="#C9C9C9"/>
<rect x="577" y="599" width="1" height="29" fill="#DADADA"/>
<rect x="586" y="599" width="1" height="29" fill="#555555"/><rect x="577" y="627" width="10" height="1" fill="#555555"/>
<rect x="589" y="607" width="10" height="21" fill="#C9C9C9"/>
<rect x="589" y="607" width="1" height="21" fill="#DADADA"/>
<rect x="598" y="607" width="1" height="21" fill="#555555"/><rect x="589" y="627" width="10" height="1" fill="#555555"/>
<rect x="601" y="617" width="10" height="11" fill="#C9C9C9"/>
<rect x="601" y="617" width="1" height="11" fill="#DADADA"/>
<rect x="610" y="617" width="1" height="11" fill="#555555"/><rect x="601" y="627" width="10" height="1" fill="#555555"/>
<rect x="613" y="624" width="10" height="4" fill="#C9C9C9"/>
<rect x="613" y="624" width="1" height="4" fill="#DADADA"/>
<rect x="622" y="624" width="1" height="4" fill="#555555"/><rect x="613" y="627" width="10" height="1" fill="#555555"/>
<rect x="625" y="626" width="10" height="2" fill="#C9C9C9"/>
<rect x="634" y="626" width="1" height="2" fill="#555555"/><rect x="625" y="627" width="10" height="1" fill="#555555"/>
<rect x="637" y="627" width="10" height="1" fill="#C9C9C9"/>
<rect x="646" y="627" width="1" height="1" fill="#555555"/><rect x="637" y="627" width="10" height="1" fill="#555555"/>
<rect x="649" y="627" width="10" height="1" fill="#C9C9C9"/>
<rect x="658" y="627" width="1" height="1" fill="#555555"/><rect x="649" y="627" width="10" height="1" fill="#555555"/>
<rect x="673" y="627" width="10" height="1" fill="#C9C9C9"/>
<rect x="682" y="627" width="1" height="1" fill="#555555"/><rect x="673" y="627" width="10" height="1" fill="#555555"/>
<rect x="720" y="627" width="10" height="1" fill="#C9C9C9"/>
<rect x="729" y="627" width="1" height="1" fill="#555555"/><rect x="720" y="627" width="10" height="1" fill="#555555"/>
</g>
<path d="M146,613.5 H737" stroke="#000" stroke-width="1" stroke-dasharray="2 1"/>
<path d="M146,597.5 H737" stroke="#000" stroke-width="1" stroke-dasharray="2 1"/>
<path d="M146,581.5 H737" stroke="#000" stroke-width="1" stroke-dasharray="2 1"/>
<path d="M146,565.5 H737" stroke="#000" stroke-width="1" stroke-dasharray="2 1"/>
<path d="M146,549.5 H737" stroke="#000" stroke-width="1" stroke-dasharray="2 1"/>
<path d="M146,533.5 H737" stroke="#000" stroke-width="1" stroke-dasharray="2 1"/>
<path d="M187.5,533 V630" stroke="#000" stroke-width="1" stroke-dasharray="2 1"/>
<path d="M357.5,533 V630" stroke="#000" stroke-width="1" stroke-dasharray="2 1"/>
<path d="M528.5,533 V630" stroke="#000" stroke-width="1" stroke-dasharray="2 1"/>
<path d="M698.5,533 V630" stroke="#000" stroke-width="1" stroke-dasharray="2 1"/>
<rect x="145.5" y="532.5" width="593" height="98" fill="none" stroke="#000" stroke-width="1"/>
<g clip-path="url(#clipBot)">
<text x="144" y="617" font-size="11" font-weight="normal" fill="#000" text-anchor="end" stroke="#000" stroke-width="0.18" >100</text>
<text x="144" y="601" font-size="11" font-weight="normal" fill="#000" text-anchor="end" stroke="#000" stroke-width="0.18" >200</text>
<text x="144" y="585" font-size="11" font-weight="normal" fill="#000" text-anchor="end" stroke="#000" stroke-width="0.18" >300</text>
<text x="144" y="569" font-size="11" font-weight="normal" fill="#000" text-anchor="end" stroke="#000" stroke-width="0.18" >400</text>
<text x="144" y="553" font-size="11" font-weight="normal" fill="#000" text-anchor="end" stroke="#000" stroke-width="0.18" >500</text>
<text x="144" y="537" font-size="11" font-weight="normal" fill="#000" text-anchor="end" stroke="#000" stroke-width="0.18" >600</text>
</g>
<text x="186.5" y="642" font-size="11" font-weight="normal" fill="#000" text-anchor="middle" stroke="#000" stroke-width="0.18" >0</text>
<text x="357.5" y="642" font-size="11" font-weight="normal" fill="#000" text-anchor="middle" stroke="#000" stroke-width="0.18" >5.000</text>
<text x="527" y="642" font-size="11" font-weight="normal" fill="#000" text-anchor="middle" stroke="#000" stroke-width="0.18" >10.000</text>
<text x="697.5" y="642" font-size="11" font-weight="normal" fill="#000" text-anchor="middle" stroke="#000" stroke-width="0.18" >15.000</text>
<text x="442" y="666" font-size="11" font-weight="normal" fill="#000" text-anchor="middle" stroke="#000" stroke-width="0.18" textLength="64" lengthAdjust="spacingAndGlyphs" >Velocity (m/s)</text>
<text transform="translate(78,581.5) rotate(-90)" font-size="11" text-anchor="middle" textLength="33.5" lengthAdjust="spacingAndGlyphs">Counts</text>
<text x="772.5" y="171" font-size="11" font-weight="bold" stroke="#000" stroke-width="0.25">D</text>
<text x="781" y="175.8" font-size="9.5" font-weight="bold" textLength="13.5" lengthAdjust="spacingAndGlyphs" stroke="#000" stroke-width="0.25">10</text>
<text x="944.5" y="173" font-size="11" font-weight="normal" fill="#000" text-anchor="end" stroke="#000" stroke-width="0.18" >213.0</text>
<text x="954.5" y="173" font-size="11" font-weight="bold" fill="#000" text-anchor="start" textLength="18" lengthAdjust="spacingAndGlyphs" stroke="#000" stroke-width="0.25">µm</text>
<text x="772.5" y="193" font-size="11" font-weight="bold" stroke="#000" stroke-width="0.25">D</text>
<text x="781" y="197.8" font-size="9.5" font-weight="bold" textLength="13.5" lengthAdjust="spacingAndGlyphs" stroke="#000" stroke-width="0.25">20</text>
<text x="944.5" y="195" font-size="11" font-weight="normal" fill="#000" text-anchor="end" stroke="#000" stroke-width="0.18" >269.8</text>
<text x="954.5" y="195" font-size="11" font-weight="bold" fill="#000" text-anchor="start" textLength="18" lengthAdjust="spacingAndGlyphs" stroke="#000" stroke-width="0.25">µm</text>
<text x="772.5" y="216" font-size="11" font-weight="bold" stroke="#000" stroke-width="0.25">D</text>
<text x="781" y="220.8" font-size="9.5" font-weight="bold" textLength="13.5" lengthAdjust="spacingAndGlyphs" stroke="#000" stroke-width="0.25">30</text>
<text x="944.5" y="218" font-size="11" font-weight="normal" fill="#000" text-anchor="end" stroke="#000" stroke-width="0.18" >348.2</text>
<text x="954.5" y="218" font-size="11" font-weight="bold" fill="#000" text-anchor="start" textLength="18" lengthAdjust="spacingAndGlyphs" stroke="#000" stroke-width="0.25">µm</text>
<text x="772.5" y="239" font-size="11" font-weight="bold" stroke="#000" stroke-width="0.25">D</text>
<text x="781" y="243.8" font-size="9.5" font-weight="bold" textLength="13.5" lengthAdjust="spacingAndGlyphs" stroke="#000" stroke-width="0.25">32</text>
<text x="944.5" y="241" font-size="11" font-weight="normal" fill="#000" text-anchor="end" stroke="#000" stroke-width="0.18" >579.8</text>
<text x="954.5" y="241" font-size="11" font-weight="bold" fill="#000" text-anchor="start" textLength="18" lengthAdjust="spacingAndGlyphs" stroke="#000" stroke-width="0.25">µm</text>
<text x="772.5" y="262" font-size="11" font-weight="bold" fill="#000" text-anchor="start" textLength="66.2" lengthAdjust="spacingAndGlyphs" stroke="#000" stroke-width="0.25">Diameter σ:</text>
<text x="944.5" y="262" font-size="11" font-weight="normal" fill="#000" text-anchor="end" stroke="#000" stroke-width="0.18" >165.6</text>
<text x="954.5" y="262" font-size="11" font-weight="bold" fill="#000" text-anchor="start" textLength="18" lengthAdjust="spacingAndGlyphs" stroke="#000" stroke-width="0.25">µm</text>
<text x="772.5" y="281" font-size="11" font-weight="bold" fill="#000" text-anchor="start" textLength="79" lengthAdjust="spacingAndGlyphs" stroke="#000" stroke-width="0.25">Diameter Min:</text>
<text x="944.5" y="281" font-size="11" font-weight="normal" fill="#000" text-anchor="end" stroke="#000" stroke-width="0.18" >36.5</text>
<text x="954.5" y="281" font-size="11" font-weight="bold" fill="#000" text-anchor="start" textLength="18" lengthAdjust="spacingAndGlyphs" stroke="#000" stroke-width="0.25">µm</text>
<text x="772.5" y="300" font-size="11" font-weight="bold" fill="#000" text-anchor="start" textLength="83" lengthAdjust="spacingAndGlyphs" stroke="#000" stroke-width="0.25">Diameter Max:</text>
<text x="944.5" y="300" font-size="11" font-weight="normal" fill="#000" text-anchor="end" stroke="#000" stroke-width="0.18" >2434.4</text>
<text x="954.5" y="300" font-size="11" font-weight="bold" fill="#000" text-anchor="start" textLength="18" lengthAdjust="spacingAndGlyphs" stroke="#000" stroke-width="0.25">µm</text>
<text x="772.5" y="319" font-size="11" font-weight="bold" fill="#000" text-anchor="start" textLength="42" lengthAdjust="spacingAndGlyphs" stroke="#000" stroke-width="0.25">Counts:</text>
<text x="944.5" y="319" font-size="11" font-weight="normal" fill="#000" text-anchor="end" stroke="#000" stroke-width="0.18" >17127</text>
<text x="772.5" y="338" font-size="11" font-weight="bold" fill="#000" text-anchor="start" textLength="93.6" lengthAdjust="spacingAndGlyphs" stroke="#000" stroke-width="0.25">Number Density:</text>
<text x="944.5" y="338" font-size="11" font-weight="normal" fill="#000" text-anchor="end" stroke="#000" stroke-width="0.18" >9</text>
<text x="954.5" y="338" font-size="11" font-weight="bold" fill="#000" text-anchor="start" textLength="35.8" lengthAdjust="spacingAndGlyphs" stroke="#000" stroke-width="0.25">1/cm³</text>
<text x="772.5" y="357" font-size="11" font-weight="bold" fill="#000" text-anchor="start" textLength="28" lengthAdjust="spacingAndGlyphs" stroke="#000" stroke-width="0.25">LWC:</text>
<text x="944.5" y="357" font-size="11" font-weight="normal" fill="#000" text-anchor="end" stroke="#000" stroke-width="0.18" >193.671</text>
<text x="954.5" y="357" font-size="11" font-weight="bold" fill="#000" text-anchor="start" textLength="30.5" lengthAdjust="spacingAndGlyphs" stroke="#000" stroke-width="0.25">g/m³</text>
<text x="772.5" y="376" font-size="11" font-weight="bold" fill="#000" text-anchor="start" textLength="71.3" lengthAdjust="spacingAndGlyphs" stroke="#000" stroke-width="0.25">Volume Flux:</text>
<text x="944.5" y="376" font-size="11" font-weight="normal" fill="#000" text-anchor="end" stroke="#000" stroke-width="0.18" >3.873E-1</text>
<text x="954.5" y="376" font-size="11" font-weight="bold" fill="#000" text-anchor="start" textLength="29.3" lengthAdjust="spacingAndGlyphs" stroke="#000" stroke-width="0.25">cm/s</text>
<text x="772.5" y="395" font-size="11" font-weight="bold" fill="#000" text-anchor="start" textLength="84.2" lengthAdjust="spacingAndGlyphs" stroke="#000" stroke-width="0.25">PVC Data Rate:</text>
<text x="944.5" y="395" font-size="11" font-weight="normal" fill="#000" text-anchor="end" stroke="#000" stroke-width="0.18" >226.0</text>
<text x="954.5" y="395" font-size="11" font-weight="bold" fill="#000" text-anchor="start" textLength="14" lengthAdjust="spacingAndGlyphs" stroke="#000" stroke-width="0.25">Hz</text>
<text x="772.5" y="416.5" font-size="11" font-weight="bold" fill="#000" text-anchor="start" textLength="118.8" lengthAdjust="spacingAndGlyphs" stroke="#000" stroke-width="0.25">Histogram Bin Width:</text>
<rect x="901.5" y="403.5" width="43" height="19" fill="#FFFFFF" stroke="#8E9CA6"/>
<text x="940" y="416.5" font-size="11" font-weight="normal" fill="#000" text-anchor="end" stroke="#000" stroke-width="0.18" >2.0</text>
<text x="954.5" y="416.5" font-size="11" font-weight="bold" fill="#000" text-anchor="start" textLength="18" lengthAdjust="spacingAndGlyphs" stroke="#000" stroke-width="0.25">µm</text>
<text x="773" y="524" font-size="11" font-weight="bold" fill="#000" text-anchor="start" textLength="98.6" lengthAdjust="spacingAndGlyphs" stroke="#000" stroke-width="0.25">Average Velocity:</text>
<text x="915.5" y="524" font-size="11" font-weight="normal" fill="#000" text-anchor="end" stroke="#000" stroke-width="0.18" >7.753</text>
<text x="925.5" y="524" font-size="11" font-weight="bold" fill="#000" text-anchor="start" textLength="23" lengthAdjust="spacingAndGlyphs" stroke="#000" stroke-width="0.25">m/s</text>
<text x="773" y="542" font-size="11" font-weight="bold" fill="#000" text-anchor="start" textLength="57.5" lengthAdjust="spacingAndGlyphs" stroke="#000" stroke-width="0.25">Velocity σ:</text>
<text x="915.5" y="542" font-size="11" font-weight="normal" fill="#000" text-anchor="end" stroke="#000" stroke-width="0.18" >2.638</text>
<text x="925.5" y="542" font-size="11" font-weight="bold" fill="#000" text-anchor="start" textLength="23" lengthAdjust="spacingAndGlyphs" stroke="#000" stroke-width="0.25">m/s</text>
<text x="773" y="561" font-size="11" font-weight="bold" fill="#000" text-anchor="start" textLength="71" lengthAdjust="spacingAndGlyphs" stroke="#000" stroke-width="0.25">Velocity Min:</text>
<text x="915.5" y="561" font-size="11" font-weight="normal" fill="#000" text-anchor="end" stroke="#000" stroke-width="0.18" >-1.205</text>
<text x="925.5" y="561" font-size="11" font-weight="bold" fill="#000" text-anchor="start" textLength="23" lengthAdjust="spacingAndGlyphs" stroke="#000" stroke-width="0.25">m/s</text>
<text x="773" y="580" font-size="11" font-weight="bold" fill="#000" text-anchor="start" textLength="75" lengthAdjust="spacingAndGlyphs" stroke="#000" stroke-width="0.25">Velocity Max:</text>
<text x="915.5" y="580" font-size="11" font-weight="normal" fill="#000" text-anchor="end" stroke="#000" stroke-width="0.18" >15.797</text>
<text x="925.5" y="580" font-size="11" font-weight="bold" fill="#000" text-anchor="start" textLength="23" lengthAdjust="spacingAndGlyphs" stroke="#000" stroke-width="0.25">m/s</text>
<text x="773" y="599" font-size="11" font-weight="bold" fill="#000" text-anchor="start" textLength="59.6" lengthAdjust="spacingAndGlyphs" stroke="#000" stroke-width="0.25">Data Rate:</text>
<text x="915.5" y="599" font-size="11" font-weight="normal" fill="#000" text-anchor="end" stroke="#000" stroke-width="0.18" >132.0</text>
<text x="925.5" y="599" font-size="11" font-weight="bold" fill="#000" text-anchor="start" textLength="13.5" lengthAdjust="spacingAndGlyphs" stroke="#000" stroke-width="0.25">Hz</text>
<text x="3.1" y="702.5" font-size="11" font-weight="normal" fill="#000" text-anchor="start" stroke="#000" stroke-width="0.18" textLength="120.8" lengthAdjust="spacingAndGlyphs" >Data Acquisition Stopped</text>
</svg>
</body></html>
